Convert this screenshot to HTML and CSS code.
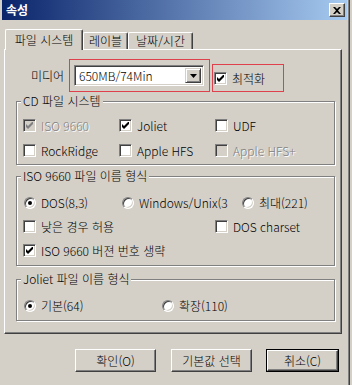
FILE: index.html
```html
<!DOCTYPE html>
<html lang="ko">
<head>
    <meta charset="UTF-8">
    <meta name="viewport" content="width=device-width, initial-scale=1.0">
    <link rel="stylesheet" href="styles.css">
    <title>속성</title>
</head>
<body>

    <div class="window">
        <div class="titlebar">
            <span class="title">속성</span>
            <span class="close-btn">
                <svg width="8" height="7" viewBox="0 0 8 7"><path d="M0 0h2l2 2 2-2h2L5 3.5 8 7H6L4 5 2 7H0l3-3.5z" fill="#000"/></svg>
            </span>
        </div>

        <div class="tabs">
            <div class="tab tab-fs active">파일 시스템</div>
            <div class="tab tab-label">레이블</div>
            <div class="tab tab-date">날짜/시간</div>
        </div>

        <div class="panel">
            <div class="media-row">
                <span class="media-label">미디어</span>
                <div class="mark mark-media">
                    <div class="combo">
                        <span class="combo-text">650MB/74Min</span>
                        <span class="combo-btn">
                            <svg width="7" height="4" viewBox="0 0 7 4"><path d="M0 0h7L3.5 4z" fill="#000"/></svg>
                        </span>
                    </div>
                </div>
                <div class="mark mark-opt">
                    <label class="opt">
                        <span class="cb"><svg width="7" height="7" viewBox="0 0 7 7"><path d="M0 2v3l2 2 5-5V-1L2 4z" fill="#000"/></svg></span>
                        최적화
                    </label>
                </div>
            </div>

            <fieldset class="group group-cd">
                <legend>CD 파일 시스템</legend>
                <div class="cols3">
                    <label class="opt disabled">
                        <span class="cb"><svg width="7" height="7" viewBox="0 0 7 7"><path d="M0 2v3l2 2 5-5V-1L2 4z" fill="#808080"/></svg></span>
                        ISO 9660
                    </label>
                    <label class="opt">
                        <span class="cb"><svg width="7" height="7" viewBox="0 0 7 7"><path d="M0 2v3l2 2 5-5V-1L2 4z" fill="#000"/></svg></span>
                        Joliet
                    </label>
                    <label class="opt">
                        <span class="cb"></span>
                        UDF
                    </label>
                    <label class="opt">
                        <span class="cb"></span>
                        RockRidge
                    </label>
                    <label class="opt">
                        <span class="cb"></span>
                        Apple HFS
                    </label>
                    <label class="opt disabled">
                        <span class="cb"></span>
                        Apple HFS+
                    </label>
                </div>
            </fieldset>

            <fieldset class="group group-iso">
                <legend>ISO 9660 파일 이름 형식</legend>
                <div class="row">
                    <label class="opt w-dos"><span class="rb on"></span>DOS(8,3)</label>
                    <label class="opt w-win"><span class="rb"></span>Windows/Unix(3</label>
                    <label class="opt"><span class="rb"></span>최대(221)</label>
                </div>
                <div class="row">
                    <label class="opt w-low"><span class="cb"></span>낮은 경우 허용</label>
                    <label class="opt"><span class="cb"></span>DOS charset</label>
                </div>
                <div class="row">
                    <label class="opt">
                        <span class="cb"><svg width="7" height="7" viewBox="0 0 7 7"><path d="M0 2v3l2 2 5-5V-1L2 4z" fill="#000"/></svg></span>
                        ISO 9660 버젼 번호 생략
                    </label>
                </div>
            </fieldset>

            <fieldset class="group group-joliet">
                <legend>Joliet 파일 이름 형식</legend>
                <div class="row">
                    <label class="opt w-basic"><span class="rb on"></span>기본(64)</label>
                    <label class="opt"><span class="rb"></span>확장(110)</label>
                </div>
            </fieldset>
        </div>

        <div class="buttons">
            <div class="btn btn-ok">확인(O)</div>
            <div class="btn btn-default">기본값 선택</div>
            <div class="btn-frame"><div class="btn btn-cancel">취소(C)</div></div>
        </div>
    </div>

</body>
</html>
```

FILE: styles.css
```css
body {
    margin: 0;
    background: #d4d0c8;
    font-family: "Noto Sans CJK KR", "Noto Sans", sans-serif;
    font-size: 12px;
    font-weight: 300;
    color: #000;
}

.window {
    width: 347px;
    height: 400px;
    padding-left: 2px;
    background: #d4d0c8;
    border-right: 1px solid #404040;
    box-shadow: inset -1px 0 0 #808080;
    overflow: hidden;
}

/* title bar */
.titlebar {
    height: 20px;
    margin-right: 2px;
    display: flex;
    align-items: center;
    justify-content: space-between;
    padding: 0 2px 0 4px;
    background: linear-gradient(to right, #0a246a, #a6caf0);
}

.title {
    color: #fff;
    font-weight: bold;
    line-height: 20px;
}

.close-btn {
    width: 16px;
    height: 14px;
    box-sizing: border-box;
    display: flex;
    align-items: center;
    justify-content: center;
    background: #d4d0c8;
    border: 1px solid;
    border-color: #fff #404040 #404040 #fff;
    box-shadow: inset -1px -1px 0 #808080;
}

/* tabs */
.tabs {
    display: flex;
    align-items: flex-end;
    height: 20px;
    margin-top: 9px;
    padding-left: 3px;
    position: relative;
    z-index: 1;
}

.tab {
    box-sizing: border-box;
    height: 17px;
    line-height: 15px;
    text-align: center;
    background: #d4d0c8;
    border-top: 1px solid #fff;
    border-left: 1px solid #fff;
    border-right: 1px solid #404040;
    border-radius: 2px 2px 0 0;
    box-shadow: inset -1px 0 0 #808080;
}

.tab.active {
    height: 21px;
    margin-bottom: -1px;
    line-height: 19px;
    padding-bottom: 1px;
}

.tab-fs { width: 78px; }
.tab-label { width: 45px; }
.tab-date { width: 65px; }

/* tab panel */
.panel {
    width: 338px;
    box-sizing: border-box;
    margin-left: 2px;
    padding: 0 0 12px 0;
    border: 1px solid;
    border-color: #fff #404040 #404040 #fff;
    box-shadow: inset -1px -1px 0 #808080;
}

.media-row {
    display: flex;
    align-items: flex-end;
    margin-top: 9px;
    padding-left: 26px;
}

.media-label {
    align-self: center;
    width: 36px;
    margin-right: 2px;
    line-height: 14px;
}

.mark {
    box-sizing: border-box;
    border: 1px solid #e0404c;
    display: flex;
    align-items: center;
}

.mark-media {
    width: 141px;
    height: 33px;
    padding-left: 4px;
}

.mark-opt {
    width: 72px;
    height: 28px;
    margin-left: 2px;
    padding-left: 1px;
}

.combo {
    width: 130px;
    height: 21px;
    box-sizing: border-box;
    display: flex;
    align-items: center;
    background: #fff;
    border: 1px solid;
    border-color: #808080 #fff #fff #808080;
    box-shadow: inset 1px 1px 0 #404040, inset -1px -1px 0 #d4d0c8;
    padding: 2px;
}

.combo-text {
    flex: 1;
    padding-left: 2px;
    line-height: 14px;
}

.combo-btn {
    width: 16px;
    height: 15px;
    box-sizing: border-box;
    display: flex;
    align-items: center;
    justify-content: center;
    background: #d4d0c8;
    border: 1px solid;
    border-color: #d4d0c8 #404040 #404040 #d4d0c8;
    box-shadow: inset 1px 1px 0 #fff, inset -1px -1px 0 #808080;
}

/* group boxes */
.group {
    margin: 0 0 0 11px;
    width: 319px;
    box-sizing: border-box;
    min-width: 0;
    border: 1px solid #808080;
    box-shadow: inset 1px 1px 0 #fff, 1px 1px 0 #fff;
    padding: 0 0 0 4px;
}

.group legend {
    padding: 0 2px;
    line-height: 14px;
    background: #d4d0c8;
}

.group-cd {
    margin-top: 2px;
    padding-top: 11px;
    padding-bottom: 7px;
}

.group-iso {
    margin-top: 4px;
    padding-top: 13px;
    padding-bottom: 8px;
}

.group-joliet {
    margin-top: 6px;
    padding-top: 13px;
    padding-bottom: 8px;
}

.cols3 {
    display: grid;
    grid-template-columns: 96px 96px auto;
    row-gap: 12px;
    margin-left: 2px;
}

.row {
    display: flex;
    margin-left: 2px;
    margin-top: 11px;
}

.row:first-of-type {
    margin-top: 0;
}

.opt {
    display: flex;
    align-items: center;
    height: 13px;
    line-height: 13px;
    white-space: nowrap;
}

.w-dos { width: 98px; }
.w-win { width: 120px; }
.w-low { width: 192px; }
.w-basic { width: 138px; }

.opt.disabled {
    color: #808080;
    text-shadow: 1px 1px 0 #fff;
}

/* checkbox */
.cb {
    width: 13px;
    height: 13px;
    box-sizing: border-box;
    margin-right: 5px;
    display: flex;
    align-items: center;
    justify-content: center;
    background: #fff;
    border: 1px solid;
    border-color: #808080 #fff #fff #808080;
    box-shadow: inset 1px 1px 0 #404040, inset -1px -1px 0 #d4d0c8;
}

.disabled .cb {
    background: #d4d0c8;
}

/* radio */
.rb {
    position: relative;
    width: 12px;
    height: 12px;
    box-sizing: border-box;
    margin: 0 5px 0 1px;
    border-radius: 50%;
    background: #fff;
    border: 1px solid;
    border-color: #808080 #fff #fff #808080;
    box-shadow: inset 1px 1px 0 #404040, inset -1px -1px 0 #d4d0c8;
}

.rb.on::after {
    content: "";
    position: absolute;
    left: 3px;
    top: 3px;
    width: 4px;
    height: 4px;
    border-radius: 50%;
    background: #000;
}

/* buttons */
.buttons {
    display: flex;
    align-items: center;
    margin-top: 15px;
    padding-left: 73px;
}

.btn {
    box-sizing: border-box;
    height: 23px;
    line-height: 21px;
    text-align: center;
    background: #d4d0c8;
    border: 1px solid;
    border-color: #fff #404040 #404040 #fff;
    box-shadow: inset -1px -1px 0 #808080;
}

.btn-ok { width: 81px; }
.btn-default { width: 81px; margin-left: 15px; }

.btn-frame {
    margin-left: 14px;
    border: 1px solid #000;
}

.btn-cancel { width: 71px; height: 21px; line-height: 19px; }
```
